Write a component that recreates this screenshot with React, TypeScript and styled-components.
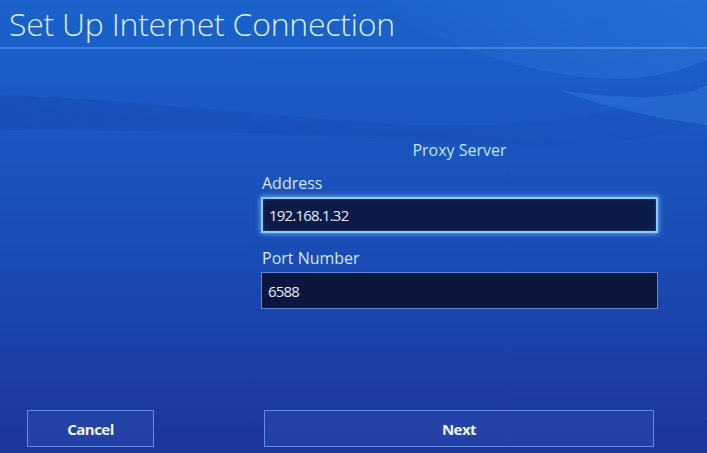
import React from "react";
import styled, { createGlobalStyle } from "styled-components";

const Global = createGlobalStyle`
  html, body { margin: 0; padding: 0; background: #1a4fb8; }
  body { font-family: "Open Sans", "Noto Sans", sans-serif; }
  * { box-sizing: border-box; }
`;

const Screen = styled.div`
  position: relative;
  width: 707px;
  height: 453px;
  overflow: hidden;
  display: flex;
  flex-direction: column;
  background: linear-gradient(180deg, #1b62ca 0%, #1a58c2 25%, #1a4cb5 55%, #1c40a8 78%, #1d369a 100%);
`;

const Backdrop = styled.svg`
  position: absolute;
  inset: 0;
  width: 707px;
  height: 453px;
  pointer-events: none;
`;

const Header = styled.header`
  position: relative;
  height: 49px;
  padding: 0 0 0 9px;
  border-bottom: 2px solid rgba(110, 170, 240, 0.45);
  display: flex;
  align-items: flex-start;
`;

const Title = styled.h1`
  margin: 0;
  font-family: "Open Sans", sans-serif;
  font-weight: 300;
  font-size: 32px;
  line-height: 48px;
  letter-spacing: -0.25px;
  color: #d9efff;
  white-space: nowrap;
`;

const Body = styled.main`
  position: relative;
  flex: 1;
  display: flex;
  padding: 90px 0 0 261px;
`;

const Form = styled.section`
  width: 397px;
  display: flex;
  flex-direction: column;
`;

const Heading = styled.div`
  font-size: 16px;
  line-height: 22px;
  color: #c3e2ff;
  text-align: center;
  margin-bottom: 11px;
`;

const Label = styled.div`
  font-size: 16px;
  line-height: 22px;
  color: #cfe8ff;
  padding-left: 1px;
  margin-bottom: 3px;
`;

const Field = styled.div<{ $focused?: boolean }>`
  height: ${(p) => (p.$focused ? "36px" : "37px")};
  display: flex;
  align-items: center;
  padding: 0 6px;
  font-size: 15px;
  letter-spacing: -0.8px;
  color: #e4ecff;
  background: ${(p) => (p.$focused ? "#0b1a47" : "#0b163f")};
  border: ${(p) => (p.$focused ? "2px solid #8fcaff" : "1.5px solid #5b88d6")};
  box-shadow: ${(p) =>
    p.$focused ? "0 0 5px 1px rgba(120, 190, 255, 0.75), inset 0 0 3px rgba(120,190,255,0.35)" : "none"};
  margin-bottom: 14px;
`;

const Footer = styled.footer`
  position: relative;
  height: 37px;
  margin-bottom: 6px;
  display: flex;
  padding-left: 27px;
  gap: 110px;
`;

const Button = styled.button<{ $w: number }>`
  width: ${(p) => p.$w}px;
  height: 37px;
  background: rgba(90, 130, 230, 0.12);
  border: 1.5px solid #5f8ee6;
  color: #eef4ff;
  font-family: "Open Sans", sans-serif;
  font-weight: 700;
  font-size: 15px;
  letter-spacing: -0.5px;
  padding: 0;
  cursor: pointer;
`;

export default function App() {
  return (
    <>
      <Global />
      <Screen>
        <Backdrop viewBox="0 0 707 453" aria-hidden>
          <defs>
            <linearGradient id="sw1" x1="0" y1="0" x2="1" y2="0">
              <stop offset="0" stopColor="#2a72d8" stopOpacity="0" />
              <stop offset="0.5" stopColor="#2f7ade" stopOpacity="0.5" />
              <stop offset="1" stopColor="#3a86e4" stopOpacity="0.6" />
            </linearGradient>
            <linearGradient id="sw2" x1="0" y1="0" x2="1" y2="0">
              <stop offset="0" stopColor="#1540a8" stopOpacity="0.35" />
              <stop offset="1" stopColor="#1545ad" stopOpacity="0.1" />
            </linearGradient>
          </defs>
          <path d="M360 0 C 420 30, 470 55, 540 70 C 610 85, 660 80, 707 60 L 707 0 Z" fill="url(#sw1)" opacity="0.55" />
          <path d="M0 95 C 150 100, 300 120, 420 125 C 540 130, 640 110, 707 80 L 707 120 C 640 150, 520 150, 400 140 C 280 132, 120 130, 0 130 Z" fill="url(#sw2)" />
          <path d="M560 90 C 620 100, 680 100, 707 85 L 707 125 C 670 120, 610 110, 560 90 Z" fill="#3a88e6" opacity="0.35" />
        </Backdrop>
        <Header>
          <Title>Set Up Internet Connection</Title>
        </Header>
        <Body>
          <Form>
            <Heading>Proxy Server</Heading>
            <Label>Address</Label>
            <Field $focused>192.168.1.32</Field>
            <Label>Port Number</Label>
            <Field>6588</Field>
          </Form>
        </Body>
        <Footer>
          <Button $w={127}>Cancel</Button>
          <Button $w={390}>Next</Button>
        </Footer>
      </Screen>
    </>
  );
}
